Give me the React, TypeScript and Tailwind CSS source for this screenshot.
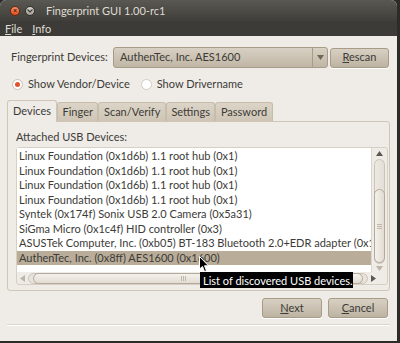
import React from 'react';

const font = { fontFamily: 'Lato, "Noto Sans", sans-serif' };

const devices = [
  'Linux Foundation (0x1d6b) 1.1 root hub (0x1)',
  'Linux Foundation (0x1d6b) 1.1 root hub (0x1)',
  'Linux Foundation (0x1d6b) 1.1 root hub (0x1)',
  'Linux Foundation (0x1d6b) 1.1 root hub (0x1)',
  'Syntek (0x174f) Sonix USB 2.0 Camera (0x5a31)',
  'SiGma Micro (0x1c4f) HID controller (0x3)',
  'ASUSTek Computer, Inc. (0xb05) BT-183 Bluetooth 2.0+EDR adapter (0x1771)',
  'AuthenTec, Inc. (0x8ff) AES1600 (0x1600)',
];

const tabs = ['Devices', 'Finger', 'Scan/Verify', 'Settings', 'Password'];

const Btn: React.FC<{ children: React.ReactNode; className?: string }> = ({ children, className = '' }) => (
  <div
    className={`flex items-center justify-center rounded-[3px] border border-[#a89c88] bg-gradient-to-b from-[#d8d0c3] to-[#bdb3a2] text-[#3c3b37] shadow-[0_1px_0_#fff] ${className}`}
  >
    {children}
  </div>
);

export default function App() {
  return (
    <div className="w-[400px] h-[343px] bg-[#2c2b28] overflow-hidden text-[11px] text-[#3c3b37]" style={font}>
      <div className="relative w-[397px] h-[341px] rounded-t-[6px] bg-[#efebe7] flex flex-col overflow-hidden">
        {/* title bar */}
        <div className="h-[21px] bg-gradient-to-b from-[#5a5852] to-[#3f3e3a] flex items-center pl-[10px]">
          <div className="w-[10px] h-[10px] rounded-full bg-gradient-to-b from-[#f7916a] to-[#df4a16] border border-[#6b2a10] flex items-center justify-center text-[7px] leading-none text-[#3c1a0c] font-bold">
            ×
          </div>
          <div className="ml-[5px] w-[10px] h-[10px] rounded-full bg-gradient-to-b from-[#d8d6d0] to-[#9e9b94] border border-[#34332f] flex items-center justify-center">
            <svg width="6" height="4" viewBox="0 0 6 4">
              <path d="M0.5 0.5 L3 3 L5.5 0.5" stroke="#3c3b37" strokeWidth="1.2" fill="none" />
            </svg>
          </div>
          <span className="ml-[11px] text-[#dfdbd2] text-[11px] leading-none">Fingerprint GUI 1.00-rc1</span>
        </div>
        {/* menu bar */}
        <div className="h-[15px] bg-[#3c3b37] flex items-center pl-[5px] gap-[10px] text-[#dfdbd2] text-[11px] leading-none">
          <span><span className="underline">F</span>ile</span>
          <span><span className="underline">I</span>nfo</span>
        </div>

        {/* device row */}
        <div className="flex items-center pl-[11px] mt-[11px] h-[21px]">
          <span className="w-[102px] whitespace-nowrap">Fingerprint Devices:</span>
          <div className="flex h-[21px] w-[215px] rounded-[3px] border border-[#a89c88] bg-gradient-to-b from-[#d8d0c3] to-[#c0b6a5]">
            <div className="flex-1 flex items-center pl-[6px]">AuthenTec, Inc. AES1600</div>
            <div className="w-[15px] border-l border-[#a89c88] flex items-center justify-center">
              <svg width="7" height="5" viewBox="0 0 7 5">
                <path d="M0 0 L7 0 L3.5 5 Z" fill="#6e675c" />
              </svg>
            </div>
          </div>
          <Btn className="ml-[2px] w-[59px] h-[20px]">
            <span><span className="underline">R</span>escan</span>
          </Btn>
        </div>

        {/* radios */}
        <div className="flex items-center h-[16px] mt-[8px] pl-[12px]">
          <div className="w-[11px] h-[11px] rounded-full border border-[#c9bfb1] bg-white flex items-center justify-center">
            <div className="w-[5px] h-[5px] rounded-full bg-[#e0542c]" />
          </div>
          <span className="ml-[5px]">Show Vendor/Device</span>
          <div className="ml-[11px] w-[11px] h-[11px] rounded-full border border-[#d3cbc0] bg-white" />
          <span className="ml-[5px]">Show Drivername</span>
        </div>

        {/* tabs */}
        <div className="flex items-end mt-[7px] pl-[7px] h-[22px]">
          {tabs.map((t, i) => (
            <div
              key={t}
              className={
                i === 0
                  ? 'h-[22px] px-[5px] flex items-center rounded-t-[3px] border border-b-0 border-[#cfc6b8] bg-[#efebe7] relative z-10 -mb-px pb-px'
                  : 'h-[19px] px-[4.5px] flex items-center rounded-t-[3px] border border-b-0 border-[#c7bdad] bg-gradient-to-b from-[#dcd4c7] to-[#cec5b6]'
              }
            >
              {t}
            </div>
          ))}
        </div>
        <div className="mx-[7px] w-[383px] h-[170px] border border-[#cfc6b8] rounded-b-[3px] rounded-tr-[3px] flex flex-col pl-[8px] pr-[3px]">
          <div className="h-[13px] mt-[8px] flex items-center leading-none">Attached USB Devices:</div>
          <div className="mt-[4px] w-[372px] h-[138px] border border-[#d7cfc4] rounded-[3px] flex flex-col">
            <div className="flex h-[124px]">
              <div className="w-[356px] bg-white border-r border-[#ddd6cc] overflow-hidden pt-[1px] h-[124px]">
                {devices.map((d, i) => (
                  <div
                    key={i}
                    className={`h-[14.5px] leading-[14.5px] pl-[2px] whitespace-nowrap ${i === 7 ? 'bg-[#b9ad9a]' : ''}`}
                  >
                    {d}
                  </div>
                ))}
              </div>
              {/* vertical scrollbar */}
              <div className="w-[15px] flex flex-col items-center pt-[3px]">
                <svg width="7" height="5" viewBox="0 0 7 5">
                  <path d="M0 5 L7 5 L3.5 0 Z" fill="#5d574e" />
                </svg>
                <div className="mt-[3px] w-[11px] h-[105px] rounded-full border border-[#cbc3b6] bg-gradient-to-r from-[#ede9e3] to-[#e3ded6] flex flex-col justify-end">
                  <div className="h-[74px] rounded-full border border-[#b4aa9b] bg-gradient-to-r from-[#f4f1ec] to-[#e2dcd2] -mx-px flex items-center justify-center">
                    <div className="flex flex-col gap-[1px]">
                      <div className="w-[5px] h-px bg-[#c0b7a9]" />
                      <div className="w-[5px] h-px bg-[#c0b7a9]" />
                      <div className="w-[5px] h-px bg-[#c0b7a9]" />
                    </div>
                  </div>
                </div>
                <svg className="mt-[2px]" width="7" height="5" viewBox="0 0 7 5">
                  <path d="M0 0 L7 0 L3.5 5 Z" fill="#bcb5aa" />
                </svg>
              </div>
            </div>
            {/* horizontal scrollbar */}
            <div className="h-[13px] flex items-center pl-[3px]">
              <svg width="5" height="7" viewBox="0 0 5 7">
                <path d="M5 0 L5 7 L0 3.5 Z" fill="#bcb5aa" />
              </svg>
              <div className="ml-[3px] w-[340px] h-[11px] rounded-full border border-[#cbc3b6] bg-[#e8e4dd] flex">
                <div className="ml-[4px] w-[330px] rounded-full border border-[#b4aa9b] bg-gradient-to-b from-[#f4f1ec] to-[#e2dcd2] -my-px flex items-center justify-center pr-[20px]">
                  <div className="flex gap-[1px] -ml-[10px]">
                    <div className="w-px h-[5px] bg-[#c0b7a9]" />
                    <div className="w-px h-[5px] bg-[#c0b7a9]" />
                    <div className="w-px h-[5px] bg-[#c0b7a9]" />
                  </div>
                </div>
              </div>
              <svg className="ml-[3px]" width="5" height="7" viewBox="0 0 5 7">
                <path d="M0 0 L0 7 L5 3.5 Z" fill="#5d574e" />
              </svg>
            </div>
          </div>
        </div>

        {/* buttons */}
        <div className="flex justify-end gap-[6px] pr-[9px] mt-[7px]">
          <Btn className="w-[60px] h-[20px]">
            <span><span className="underline">N</span>ext</span>
          </Btn>
          <Btn className="w-[60px] h-[20px]">
            <span><span className="underline">C</span>ancel</span>
          </Btn>
        </div>
        <div className="mt-[6px] mx-[7px] h-[2px] border-t border-[#dcd6cc] border-b-white border-b" />

        {/* tooltip */}
        <div className="absolute left-[200px] top-[272px] w-[153px] h-[16px] bg-black text-white flex items-center pl-[3px] leading-none whitespace-nowrap">
          List of discovered USB devices.
        </div>
        {/* cursor */}
        <svg className="absolute left-[199px] top-[256px]" width="11" height="17" viewBox="0 0 11 17">
          <path d="M0.5 0.5 L0.5 13 L3.5 10.5 L5.5 15.5 L7.5 14.7 L5.5 9.8 L9.5 9.8 Z" fill="#000" stroke="#fff" strokeWidth="1" />
        </svg>
      </div>
    </div>
  );
}
